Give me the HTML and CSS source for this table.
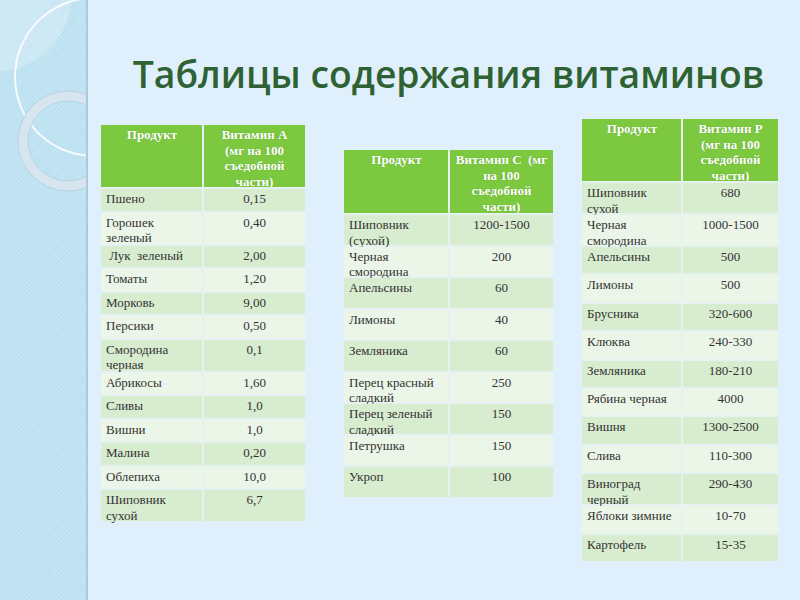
FILE: index.html
```html
<!DOCTYPE html>
<html lang="ru">
<head>
<meta charset="utf-8">
<title>Таблицы содержания витаминов</title>
<link rel="stylesheet" href="styles.css">
</head>
<body>
<div class="slide">
  <aside class="strip">
    <svg class="decor" width="88" height="600" viewBox="0 0 88 600" xmlns="http://www.w3.org/2000/svg">
      <circle cx="-6" cy="-6" r="78" fill="#ffffff" fill-opacity="0.22"/>
      <circle cx="94" cy="77" r="79" fill="none" stroke="#ffffff" stroke-opacity="0.85" stroke-width="2"/>
      <circle cx="68" cy="141" r="45" fill="none" stroke="#d7e5ee" stroke-width="10"/>
      <circle cx="68" cy="141" r="50" fill="none" stroke="#b9d2e2" stroke-width="1"/>
      <circle cx="68" cy="141" r="40" fill="none" stroke="#b9d2e2" stroke-width="1"/>
    </svg>
  </aside>
  <main class="main">
    <h1 class="title">Таблицы содержания витаминов</h1>
    <div class="tables">
      <div class="tbl t1">
        <div class="row head"><div class="c">Продукт</div><div class="c">Витамин А<br>(мг на 100<br>съедобной<br>части)</div></div>
        <div class="row s"><div class="c">Пшено</div><div class="c">0,15</div></div>
        <div class="row d"><div class="c">Горошек<br>зеленый</div><div class="c">0,40</div></div>
        <div class="row s"><div class="c">&nbsp;Лук&nbsp; зеленый</div><div class="c">2,00</div></div>
        <div class="row s"><div class="c">Томаты</div><div class="c">1,20</div></div>
        <div class="row s"><div class="c">Морковь</div><div class="c">9,00</div></div>
        <div class="row s"><div class="c">Персики</div><div class="c">0,50</div></div>
        <div class="row d"><div class="c">Смородина<br>черная</div><div class="c">0,1</div></div>
        <div class="row s"><div class="c">Абрикосы</div><div class="c">1,60</div></div>
        <div class="row s"><div class="c">Сливы</div><div class="c">1,0</div></div>
        <div class="row s"><div class="c">Вишни</div><div class="c">1,0</div></div>
        <div class="row s"><div class="c">Малина</div><div class="c">0,20</div></div>
        <div class="row s"><div class="c">Облепиха</div><div class="c">10,0</div></div>
        <div class="row d"><div class="c">Шиповник<br>сухой</div><div class="c">6,7</div></div>
      </div>
      <div class="tbl t2">
        <div class="row head"><div class="c">Продукт</div><div class="c">Витамин С&nbsp; (мг<br>на 100<br>съедобной<br>части)</div></div>
        <div class="row s"><div class="c">Шиповник<br>(сухой)</div><div class="c">1200-1500</div></div>
        <div class="row s"><div class="c">Черная<br>смородина</div><div class="c">200</div></div>
        <div class="row s"><div class="c">Апельсины</div><div class="c">60</div></div>
        <div class="row s"><div class="c">Лимоны</div><div class="c">40</div></div>
        <div class="row s"><div class="c">Земляника</div><div class="c">60</div></div>
        <div class="row s"><div class="c">Перец красный<br>сладкий</div><div class="c">250</div></div>
        <div class="row s"><div class="c">Перец зеленый<br>сладкий</div><div class="c">150</div></div>
        <div class="row s"><div class="c">Петрушка</div><div class="c">150</div></div>
        <div class="row s"><div class="c">Укроп</div><div class="c">100</div></div>
      </div>
      <div class="tbl t3">
        <div class="row head"><div class="c">Продукт</div><div class="c">Витамин Р<br>(мг на 100<br>съедобной<br>части)</div></div>
        <div class="row d"><div class="c">Шиповник<br>сухой</div><div class="c">680</div></div>
        <div class="row d"><div class="c">Черная<br>смородина</div><div class="c">1000-1500</div></div>
        <div class="row s"><div class="c">Апельсины</div><div class="c">500</div></div>
        <div class="row s"><div class="c">Лимоны</div><div class="c">500</div></div>
        <div class="row s"><div class="c">Брусника</div><div class="c">320-600</div></div>
        <div class="row s"><div class="c">Клюква</div><div class="c">240-330</div></div>
        <div class="row s"><div class="c">Земляника</div><div class="c">180-210</div></div>
        <div class="row s"><div class="c">Рябина черная</div><div class="c">4000</div></div>
        <div class="row s"><div class="c">Вишня</div><div class="c">1300-2500</div></div>
        <div class="row s"><div class="c">Слива</div><div class="c">110-300</div></div>
        <div class="row d"><div class="c">Виноград<br>черный</div><div class="c">290-430</div></div>
        <div class="row s"><div class="c">Яблоки зимние</div><div class="c">10-70</div></div>
        <div class="row s"><div class="c">Картофель</div><div class="c">15-35</div></div>
      </div>
    </div>
  </main>
</div>
</body>
</html>
```
FILE: styles.css
```css
html, body {
  margin: 0;
  padding: 0;
}
body {
  background: #dfeffc;
  width: 800px;
  height: 600px;
  overflow: hidden;
}
.slide {
  display: flex;
  width: 800px;
  height: 600px;
}
.strip {
  flex: none;
  width: 86px;
  height: 600px;
  overflow: hidden;
  border-right: 2px solid #a9cadb;
  background-color: #bfe3f2;
  background-image:
    repeating-linear-gradient(45deg, rgba(255,255,255,0.10) 0 1px, transparent 1px 3px),
    repeating-linear-gradient(-45deg, rgba(140,190,215,0.10) 0 1px, transparent 1px 3px);
}
.decor {
  display: block;
}
.main {
  flex: 1;
  min-width: 0;
}
.title {
  margin: 0;
  height: 119px;
  box-sizing: border-box;
  padding: 56px 0 0 9px;
  font-family: "Open Sans", "Liberation Sans", sans-serif;
  font-weight: 600;
  font-size: 37.3px;
  line-height: 36px;
  color: #2f6232;
  text-align: center;
  white-space: nowrap;
}
.tables {
  display: flex;
  align-items: flex-start;
  padding-left: 13px;
}
.tbl {
  display: grid;
  gap: 2px;
  background: #e6f2f2;
  font-family: "Liberation Serif", "Times New Roman", serif;
  font-size: 13px;
  line-height: 15.5px;
  color: #333333;
}
.row {
  display: contents;
}
.c {
  box-sizing: border-box;
  padding: 2px 4px 0 5px;
  overflow: visible;
  white-space: nowrap;
}
.c + .c {
  text-align: center;
  padding-left: 2px;
  padding-right: 2px;
}
.row:nth-child(even) > .c {
  background: #d8ecd0;
}
.row:nth-child(odd) > .c {
  background: #ecf6e8;
}
.row.head > .c {
  background: #7cc93f;
  color: #ffffff;
  font-weight: bold;
  text-align: center;
  text-shadow: 0 0 1px rgba(60,110,30,0.5);
}
.t1 {
  grid-template-columns: 101px 101px;
  margin-top: 6px;
}
.t1 .head > .c { height: 62px; }
.t1 .s > .c { height: 21.5px; }
.t1 .d > .c { height: 31px; }
.t2 {
  grid-template-columns: 104px 103px;
  margin-top: 31px;
  margin-left: 39px;
}
.t2 .head > .c { height: 63px; }
.t2 .s > .c { height: 29.5px; }
.t3 {
  grid-template-columns: 99px 95px;
  margin-left: 29px;
}
.t3 .head > .c { height: 62px; }
.t3 .s > .c { height: 26.4px; }
.t3 .d > .c { height: 30px; }
```
